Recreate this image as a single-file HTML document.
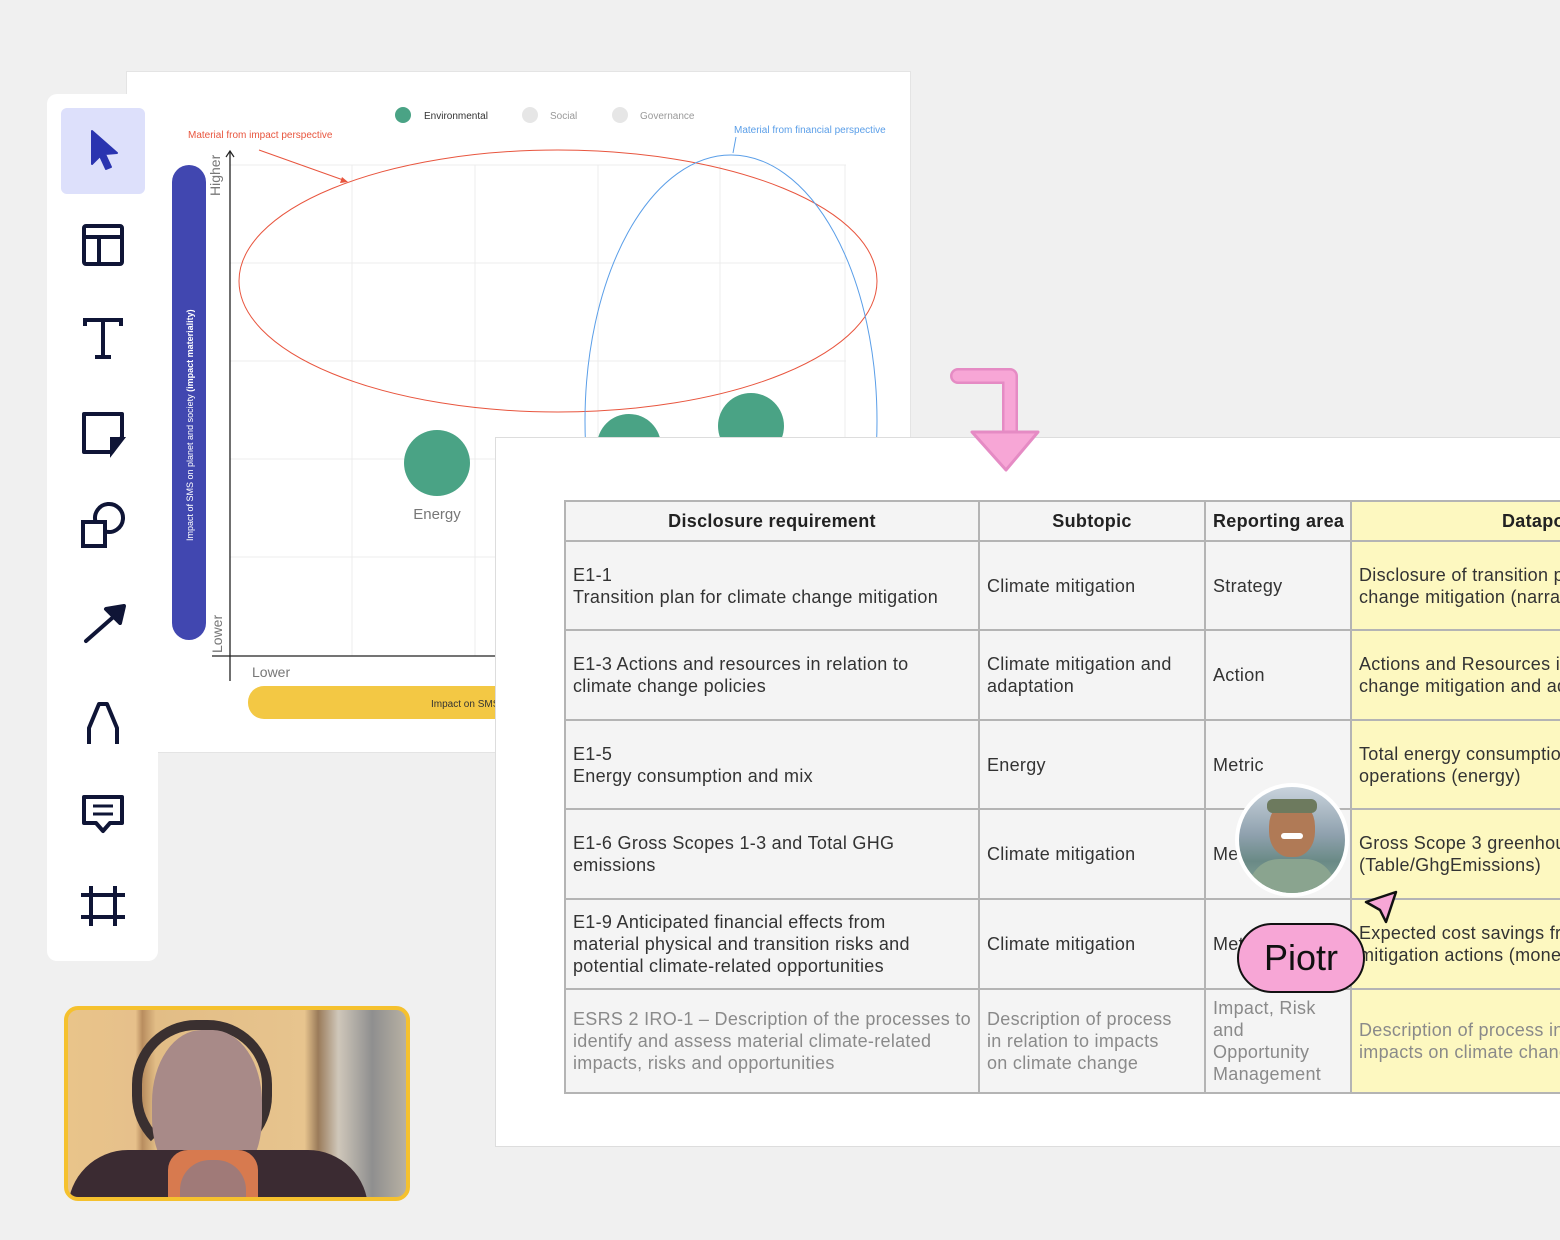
<!DOCTYPE html>
<html><head><meta charset="utf-8">
<style>
*{margin:0;padding:0;box-sizing:border-box}
body{width:1560px;height:1240px;background:#f0f0f0;position:relative;overflow:hidden;font-family:"Liberation Sans",sans-serif}
.abs{position:absolute}
#chart{left:126px;top:71px;width:785px;height:682px;background:#fff;border:1px solid #e4e4e4}
#tb{left:47px;top:94px;width:111px;height:867px;background:#fff;border-radius:10px}
#panel{left:495px;top:437px;width:1080px;height:710px;background:#fff;border:1px solid #ddd}
table{position:absolute;left:68px;top:62px;width:1086px;border-collapse:collapse;table-layout:fixed;font-size:18px;color:#333;line-height:22px;letter-spacing:0.3px}
td,th{border:2px solid #b4b4b4;background:#f4f4f4;padding:0 7px;vertical-align:middle;text-align:left;font-weight:normal;overflow:hidden;white-space:nowrap}
th{font-weight:bold;text-align:center;color:#222}
td.y,th.y{background:#fdf8c0}
tr.g td{color:#8a8a8a}
</style></head><body>

<div id="chart" class="abs">
<svg width="785" height="682" style="position:absolute;left:-1px;top:-1px" font-family="Liberation Sans, sans-serif">
 <g stroke="#ececec" stroke-width="1">
  <line x1="104" y1="94" x2="720" y2="94"/><line x1="104" y1="192" x2="720" y2="192"/><line x1="104" y1="290" x2="720" y2="290"/><line x1="104" y1="388" x2="720" y2="388"/><line x1="104" y1="486" x2="720" y2="486"/>
  <line x1="226" y1="94" x2="226" y2="585"/><line x1="349" y1="94" x2="349" y2="585"/><line x1="472" y1="94" x2="472" y2="585"/><line x1="594" y1="94" x2="594" y2="585"/><line x1="719" y1="94" x2="719" y2="585"/>
 </g>
 <rect x="46" y="94" width="34" height="475" rx="17" fill="#4147b0"/>
 <text transform="translate(67,470) rotate(-90)" font-size="9" fill="#fff">Impact of SMS on planet and society <tspan font-weight="bold">(impact materiality)</tspan></text>
 <line x1="104" y1="80" x2="104" y2="610" stroke="#222" stroke-width="1.3"/>
 <path d="M100 86 L104 80 L108 86" fill="none" stroke="#222" stroke-width="1.2"/>
 <line x1="86" y1="585" x2="370" y2="585" stroke="#222" stroke-width="1.3"/>
 <text transform="translate(94,125) rotate(-90)" font-size="14" fill="#777">Higher</text>
 <text transform="translate(96,582) rotate(-90)" font-size="14" fill="#777">Lower</text>
 <text x="126" y="606" font-size="14" fill="#777">Lower</text>
 <rect x="122" y="615" width="300" height="33" rx="16" fill="#f3c844"/>
 <text x="305" y="636" font-size="10" fill="#333">Impact on SMS</text>
 <circle cx="311" cy="392" r="33" fill="#4aa385"/>
 <text x="311" y="448" font-size="15" fill="#777" text-anchor="middle">Energy</text>
 <circle cx="503" cy="375" r="32" fill="#4aa385"/>
 <circle cx="625" cy="355" r="33" fill="#4aa385"/>
 <ellipse cx="432" cy="210" rx="319" ry="131" fill="none" stroke="#e8553e" stroke-width="1"/>
 <ellipse cx="605" cy="350" rx="146" ry="266" fill="none" stroke="#5a9ee8" stroke-width="1"/>
 <line x1="133" y1="79" x2="220" y2="110" stroke="#e8553e"/>
 <path d="M216 106 L222 111 L214 112Z" fill="#e8553e"/>
 <line x1="610" y1="66" x2="607" y2="82" stroke="#5a9ee8"/>
 <text x="62" y="67" font-size="10" fill="#e8553e">Material from impact perspective</text>
 <text x="608" y="62" font-size="10" fill="#5a9ee8">Material from financial perspective</text>
 <circle cx="277" cy="44" r="8" fill="#4aa385"/><text x="298" y="48" font-size="10" fill="#333">Environmental</text>
 <circle cx="404" cy="44" r="8" fill="#e6e6e6"/><text x="424" y="48" font-size="10" fill="#999">Social</text>
 <circle cx="494" cy="44" r="8" fill="#e6e6e6"/><text x="514" y="48" font-size="10" fill="#999">Governance</text>
</svg>
</div>

<div id="tb" class="abs">
<svg width="111" height="867" fill="none" stroke="#0f1536" stroke-width="4">
 <rect x="14" y="14" width="84" height="86" rx="6" fill="#dde0fb" stroke="none"/>
 <path d="M45 37 L45 70 L53 62 L59 75 L64 73 L58 60 L70 59Z" fill="#2a34b0" stroke="#2a34b0" stroke-width="2" stroke-linejoin="round"/>
 <rect x="37" y="132" width="38" height="38" rx="2"/><line x1="37" y1="143" x2="75" y2="143"/><line x1="52" y1="143" x2="52" y2="170"/>
 <path d="M38 232 V226 H74 V232 M56 226 V263 M48 263 H64"/>
 <path d="M37 320 H75 V343 L65 358 H37Z" stroke-linejoin="round"/><path d="M65 358 V345 H75Z" fill="#0f1536"/>
 <rect x="36" y="428" width="22" height="24"/><path d="M58 437.4 A14 14 0 1 0 48.6 428"/>
 <path d="M39 547 L72 518" stroke-linecap="round"/><path d="M59 515 L77 512 L73 529Z" fill="#0f1536" stroke-linejoin="round"/>
 <path d="M42 650 V634 L52 610 H60 L70 634 V650" stroke-linejoin="round"/>
 <path d="M37 703 H75 V729 H63 L56 737 L49 729 H37Z" stroke-linejoin="round"/><line x1="46" y1="712" x2="66" y2="712" stroke-width="3"/><line x1="46" y1="720" x2="66" y2="720" stroke-width="3"/>
 <path d="M44 792 V832 M68 792 V832 M34 801 H78 M34 823 H78"/>
</svg>
</div>

<div id="panel" class="abs" style="overflow:hidden">
<table>
<colgroup><col style="width:414px"><col style="width:226px"><col style="width:146px"><col style="width:300px"></colgroup>
<tr style="height:40px"><th>Disclosure requirement</th><th>Subtopic</th><th style="text-align:left">Reporting area</th><th class="y" style="text-align:left;padding-left:150px">Datapoint</th></tr>
<tr style="height:89px"><td>E1-1<br>Transition plan for climate change mitigation</td><td>Climate mitigation</td><td>Strategy</td><td class="y">Disclosure of transition plan for climate<br>change mitigation (narrative)</td></tr>
<tr style="height:90px"><td>E1-3 Actions and resources in relation to<br>climate change policies</td><td>Climate mitigation and<br>adaptation</td><td>Action</td><td class="y">Actions and Resources in climate<br>change mitigation and adaptation</td></tr>
<tr style="height:89px"><td>E1-5<br>Energy consumption and mix</td><td>Energy</td><td>Metric</td><td class="y">Total energy consumption from own<br>operations (energy)</td></tr>
<tr style="height:90px"><td>E1-6 Gross Scopes 1-3 and Total GHG<br>emissions</td><td>Climate mitigation</td><td>Metric</td><td class="y">Gross Scope 3 greenhouse gas<br>(Table/GhgEmissions)</td></tr>
<tr style="height:90px"><td>E1-9 Anticipated financial effects from<br>material physical and transition risks and<br>potential climate-related opportunities</td><td>Climate mitigation</td><td>Metric</td><td class="y">Expected cost savings from climate<br>mitigation actions (monetary)</td></tr>
<tr class="g" style="height:104px"><td>ESRS 2 IRO-1 – Description of the processes to<br>identify and assess material climate-related<br>impacts, risks and opportunities</td><td>Description of process<br>in relation to impacts<br>on climate change</td><td>Impact, Risk<br>and<br>Opportunity<br>Management</td><td class="y">Description of process in relation to<br>impacts on climate change</td></tr>
</table>
</div>

<svg class="abs" style="left:940px;top:360px" width="110" height="120">
 <path d="M18 16 H70 V72" fill="none" stroke="#e58bc4" stroke-width="16" stroke-linecap="round" stroke-linejoin="round"/>
 <path d="M18 16 H70 V72" fill="none" stroke="#f7a6d6" stroke-width="11" stroke-linecap="round" stroke-linejoin="round"/>
 <path d="M32 72 H98 L66 110Z" fill="#f7a6d6" stroke="#e58bc4" stroke-width="3" stroke-linejoin="round"/>
</svg>

<div class="abs" style="left:1235px;top:783px;width:114px;height:114px;border-radius:50%;background:#fff;padding:4px">
 <div style="width:106px;height:106px;border-radius:50%;overflow:hidden;background:linear-gradient(#c9d3dc 0%,#8fa1ae 45%,#6a8a86 70%,#8aa89a 100%);position:relative">
  <div class="abs" style="left:30px;top:14px;width:46px;height:56px;border-radius:45%;background:#b07a56"></div>
  <div class="abs" style="left:28px;top:12px;width:50px;height:14px;border-radius:6px;background:#6d7a5e"></div>
  <div class="abs" style="left:42px;top:46px;width:22px;height:6px;border-radius:3px;background:#fff"></div>
  <div class="abs" style="left:10px;top:72px;width:86px;height:50px;border-radius:30px 30px 0 0;background:#8aa48f"></div>
 </div>
</div>
<svg class="abs" style="left:1360px;top:888px" width="45" height="40"><path d="M6 14 L36 4 L26 34 L20 22Z" fill="#f7a6d6" stroke="#111" stroke-width="2.5" stroke-linejoin="round"/></svg>
<div class="abs" style="left:1237px;top:923px;width:128px;height:70px;border-radius:35px;background:#f7a6d6;border:2.5px solid #111;font-size:36px;color:#111;text-align:center;line-height:66px">Piotr</div>

<div class="abs" style="left:64px;top:1006px;width:346px;height:195px;border:4px solid #f5c12e;border-radius:14px;overflow:hidden;background:linear-gradient(90deg,#e9c48a 0%,#e6c08b 20%,#b88d5f 22%,#e2bd86 26%,#e7c48e 70%,#9a7b5a 74%,#cfc7ba 80%,#8f8f8f 90%,#b7b0a3 100%)">
 <div class="abs" style="left:64px;top:10px;width:140px;height:140px;border-radius:46%;border:10px solid #3a3030;border-bottom-color:transparent"></div>
 <div class="abs" style="left:84px;top:20px;width:110px;height:160px;border-radius:45%;background:#a88a88"></div>
 <div class="abs" style="left:0;top:140px;width:300px;height:60px;border-radius:60px 60px 0 0;background:#3b2b32"></div>
 <div class="abs" style="left:100px;top:140px;width:90px;height:60px;background:#d77a4f;border-radius:20px 20px 0 0"></div>
 <div class="abs" style="left:112px;top:150px;width:66px;height:50px;background:#a07a78;border-radius:30px 30px 0 0"></div>
</div>
</body></html>
